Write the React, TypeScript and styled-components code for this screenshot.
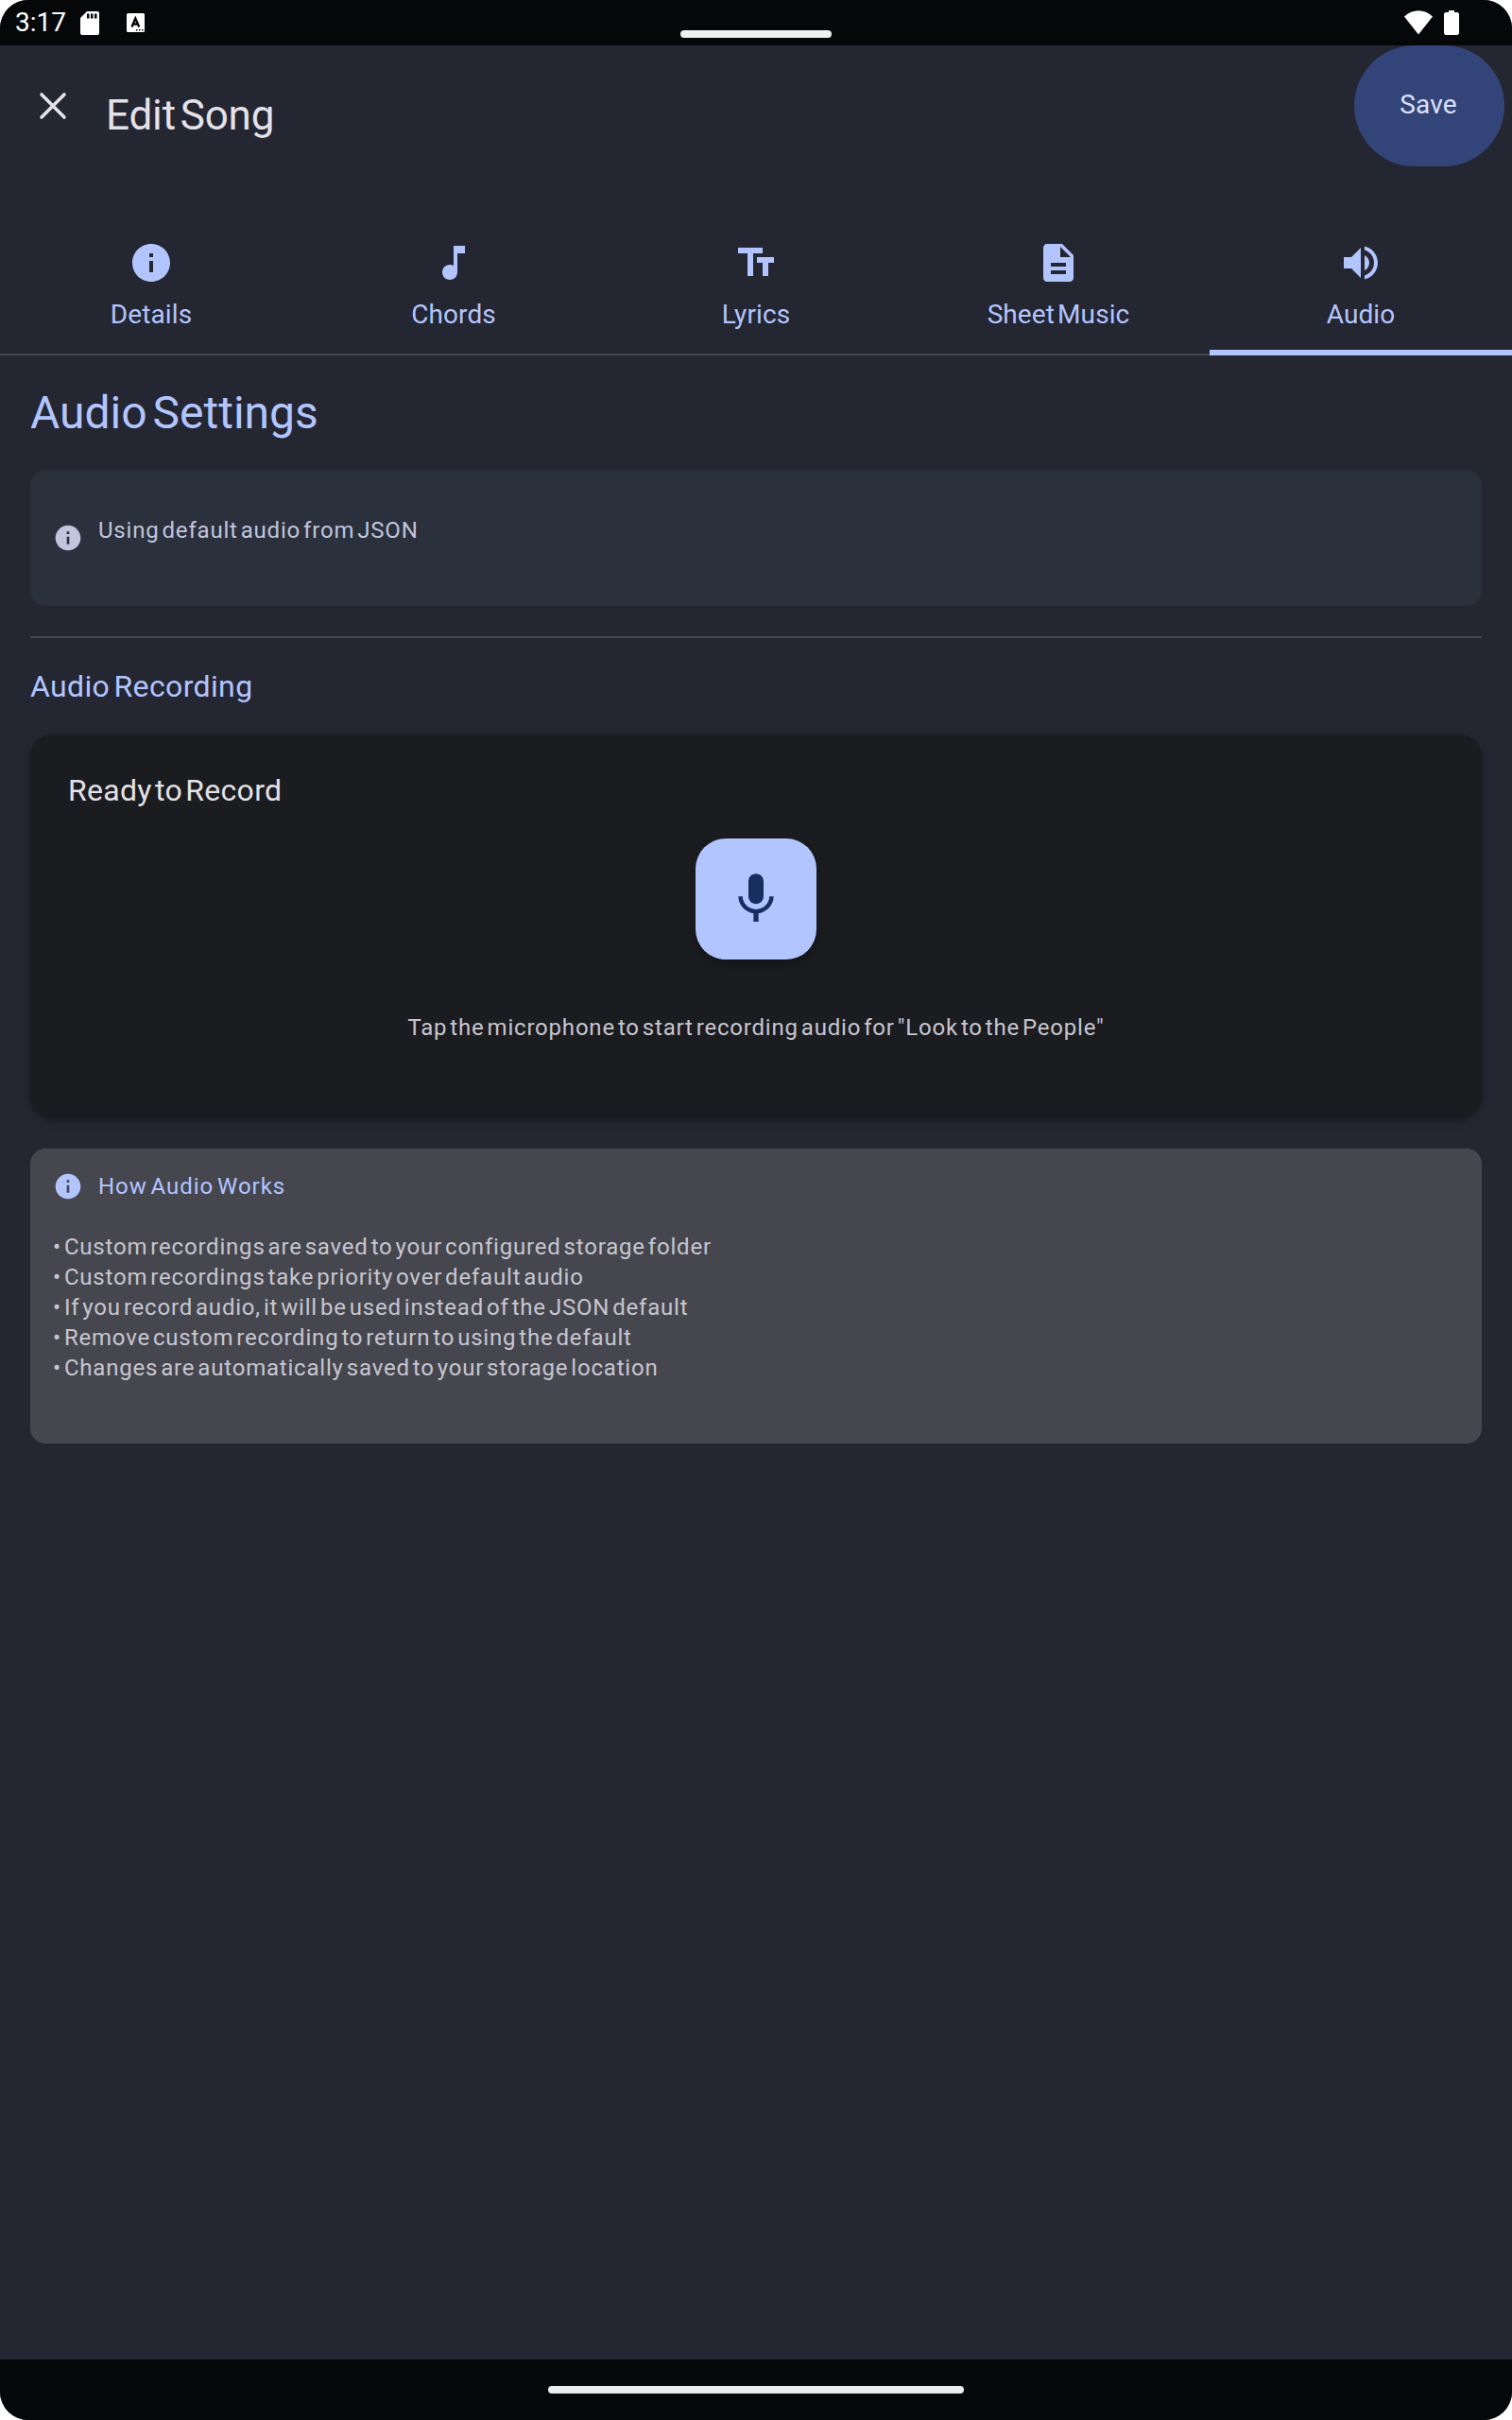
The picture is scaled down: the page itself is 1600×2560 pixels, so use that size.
import React from "react";
import styled, { createGlobalStyle } from "styled-components";

const GlobalStyle = createGlobalStyle`
  * { box-sizing: border-box; }
  html, body { margin: 0; background: #fff; }
  body { font-family: Roboto, "Noto Sans", sans-serif; }
`;

const Screen = styled.div`
  width: 1600px;
  height: 2560px;
  display: flex;
  flex-direction: column;
  background: #242631;
  border-radius: 30px;
  overflow: hidden;
`;

const StatusBar = styled.header`
  height: 48px;
  flex: none;
  display: grid;
  grid-template-columns: 1fr 160px 1fr;
  background: #060709;
`;

const StatusGroup = styled.div<{ $end?: boolean }>`
  display: flex;
  align-items: center;
  justify-content: ${(p) => (p.$end ? "flex-end" : "flex-start")};
  padding: ${(p) => (p.$end ? "0 56px 0 0" : "0 0 0 16px")};
`;

const Handle = styled.div`
  align-self: end;
  height: 8px;
  margin-bottom: 8px;
  border-radius: 4px;
  background: #eff0f4;
`;

interface TextProps {
  $size: number;
  $line: number;
  $color: string;
  $ls?: number;
  $ws?: number;
}

const Text = styled.span<TextProps>`
  display: block;
  white-space: nowrap;
  font-size: ${(p) => p.$size}px;
  line-height: ${(p) => p.$line}px;
  color: ${(p) => p.$color};
  letter-spacing: ${(p) => p.$ls ?? 0}px;
  word-spacing: ${(p) => p.$ws ?? 0}px;
`;

const StatusIcon = styled.svg<{ $gap: number }>`
  display: block;
  flex: none;
  margin-left: ${(p) => p.$gap}px;
`;

const AppBar = styled.div`
  height: 184px;
  flex: none;
  display: flex;
  align-items: flex-start;
  padding: 0 8px 0 32px;
`;

const CloseButton = styled.button`
  display: flex;
  width: 48px;
  height: 48px;
  margin: 40px 32px 0 0;
  padding: 0;
  border: 0;
  background: none;
`;

const Title = styled.h1`
  flex: 1;
  margin: 46px 0 0;
  font-weight: 400;
`;

const SaveButton = styled.button`
  width: 159px;
  height: 128px;
  display: flex;
  align-items: center;
  justify-content: center;
  padding: 0 2px 3px 0;
  border: 0;
  border-radius: 64px;
  background: #334478;
  font-family: inherit;
`;

const Tabs = styled.nav`
  height: 144px;
  flex: none;
  display: grid;
  grid-template-columns: repeat(5, 1fr);
`;

const Tab = styled.div<{ $active?: boolean }>`
  display: flex;
  flex-direction: column;
  align-items: center;
  gap: 11px;
  padding-top: 22px;
  box-shadow: inset 0 ${(p) => (p.$active ? "-6px #b3c5ff" : "-2px #46464f")};
`;

const Content = styled.main`
  flex: 1;
  padding: 0 32px;
`;

const Heading = styled.h2<{ $top: number; $bottom: number }>`
  margin: 0;
  padding: ${(p) => p.$top}px 0 ${(p) => p.$bottom}px;
  font-weight: 400;
`;

const StatusCard = styled.section`
  height: 144px;
  display: flex;
  align-items: center;
  gap: 16px;
  padding: 0 24px;
  border-radius: 16px;
  background: #2a303c;
`;

const StatusMessage = styled.div`
  padding-bottom: 16px;
`;

const Divider = styled.div`
  height: 2px;
  margin: 32px 0 0;
  background: #46464f;
`;

const RecordCard = styled.section`
  height: 406px;
  display: flex;
  flex-direction: column;
  align-items: center;
  padding: 35px 40px 0;
  border-radius: 24px;
  background: #1b1c20;
  box-shadow: 0 4px 10px rgba(0, 0, 0, 0.2), 0 1px 4px rgba(0, 0, 0, 0.1);
`;

const RecordTitle = styled.h3`
  align-self: flex-start;
  margin: 0;
  font-weight: 400;
`;

const MicButton = styled.button`
  width: 128px;
  height: 128px;
  display: flex;
  align-items: center;
  justify-content: center;
  margin: 27px 0 56px;
  padding: 0;
  border: 0;
  border-radius: 32px;
  background: #b3c5ff;
  box-shadow: 0 5px 10px rgba(0, 0, 0, 0.3);
`;

const HelpCard = styled.section`
  height: 312px;
  margin-top: 32px;
  padding: 24px;
  border-radius: 16px;
  background: #46464f;
`;

const HelpTitle = styled.div`
  display: flex;
  align-items: center;
  gap: 16px;
  margin-bottom: 32px;
`;

const HelpList = styled.ul`
  margin: 0;
  padding: 0;
  list-style: none;
`;

const NavBar = styled.footer`
  height: 64px;
  flex: none;
  display: flex;
  align-items: center;
  justify-content: center;
  background: #060709;
`;

const NavPill = styled.div`
  width: 440px;
  height: 8px;
  border-radius: 4px;
  background: #ececec;
`;

const paths = {
  info: "M12 2C6.480 2 2 6.480 2 12s4.480 10 10 10 10-4.480 10-10S17.520 2 12 2zm1 15h-2v-6h2v6zm0-8h-2V7h2v2z",
  note: "M12 3v10.550c-.590-.340-1.270-.550-2-.550-2.210 0-4 1.790-4 4s1.790 4 4 4 4-1.790 4-4V7h4V3h-6z",
  type: "M2.500 4v3h5v12h3V7h5V4h-13zm19 5h-9v3h3v7h3v-7h3V9z",
  page: "M14 2H6c-1.100 0-1.990.900-1.990 2L4 20c0 1.100.890 2 1.990 2H18c1.100 0 2-.900 2-2V8l-6-6zm2 16H8v-2h8v2zm0-4H8v-2h8v2zm-3-5V3.500L18.500 9H13z",
  volume:
    "M3 9v6h4l5 5V4L7 9H3zm13.500 3c0-1.770-1.020-3.290-2.500-4.030v8.050c1.480-.730 2.500-2.250 2.500-4.020zM14 3.230v2.060c2.890.860 5 3.540 5 6.710s-2.110 5.850-5 6.710v2.060c4.010-.910 7-4.490 7-8.770s-2.990-7.860-7-8.770z",
  mic: "M12 14c1.660 0 2.990-1.340 2.990-3L15 5c0-1.660-1.340-3-3-3S9 3.340 9 5v6c0 1.660 1.340 3 3 3zm5.300-3c0 3-2.540 5.100-5.300 5.100S6.700 14 6.700 11H5c0 3.410 2.720 6.230 6 6.720V21h2v-3.280c3.280-.480 6-3.300 6-6.720h-1.700z",
};

const Glyph = styled.svg`
  display: block;
  flex: none;
`;

function Icon({ name, size, color }: { name: keyof typeof paths; size: number; color: string }) {
  return (
    <Glyph width={size} height={size} viewBox="0 0 24 24" fill={color}>
      <path d={paths[name]} />
    </Glyph>
  );
}

const tabs: { icon: keyof typeof paths; label: string }[] = [
  { icon: "info", label: "Details" },
  { icon: "note", label: "Chords" },
  { icon: "type", label: "Lyrics" },
  { icon: "page", label: "Sheet Music" },
  { icon: "volume", label: "Audio" },
];

const notes = [
  "• Custom recordings are saved to your configured storage folder",
  "• Custom recordings take priority over default audio",
  "• If you record audio, it will be used instead of the JSON default",
  "• Remove custom recording to return to using the default",
  "• Changes are automatically saved to your storage location",
];

export default function App() {
  return (
    <>
      <GlobalStyle />
      <Screen>
        <StatusBar>
          <StatusGroup>
            <Text $size={28} $line={46} $color="#fff">3:17</Text>
            <StatusIcon $gap={15} width="22" height="26" viewBox="0 0 22 26">
              <path fill="#fff" d="M7 1h11a2 2 0 0 1 2 2v21a2 2 0 0 1-2 2H2a2 2 0 0 1-2-2V8z" />
              <path fill="#060709" d="M7 3.500h2.500v5H7zM11 3.500h2.500v5H11zM15 3.500h2.500v5H15z" />
            </StatusIcon>
            <StatusIcon $gap={27} width="20" height="20" viewBox="0 0 20 20">
              <rect width="19" height="20" rx="1.500" fill="#fff" />
              <path d="M5.500 14.500 9.300 5.500l3.900 9M7 11.500h4.800" fill="none" stroke="#060709" strokeWidth="2.400" />
              <path fill="#060709" d="M10 17h1.500v1.500H10zM13 17h1.500v1.500H13zM16 17h1.500v1.500H16z" />
            </StatusIcon>
          </StatusGroup>
          <Handle />
          <StatusGroup $end>
            <StatusIcon $gap={0} width="30" height="26" viewBox="0 0 30 26">
              <path fill="#fff" d="M0 6.500C4.500 2.500 9.500 0.300 15 0.300S25.500 2.500 30 6.500L15 25.500z" />
            </StatusIcon>
            <StatusIcon $gap={12} width="16" height="26" viewBox="0 0 16 26">
              <path fill="#fff" d="M5 0h6v2h3.500L16 3.500v21L14.500 26h-13L0 24.500v-21L1.500 2H5z" />
            </StatusIcon>
          </StatusGroup>
        </StatusBar>

        <AppBar>
          <CloseButton aria-label="Close">
            <Glyph width="48" height="48" viewBox="0 0 48 48">
              <path d="M12 12l24 24M36 12l-24 24" stroke="#e4e1e9" strokeWidth="3.600" strokeLinecap="round" />
            </Glyph>
          </CloseButton>
          <Title>
            <Text $size={44} $line={56} $color="#e4e1e9" $ls={-0.15} $ws={-6}>Edit Song</Text>
          </Title>
          <SaveButton>
            <Text $size={28} $line={40} $color="#dbe1ff" $ls={0.1}>Save</Text>
          </SaveButton>
        </AppBar>

        <Tabs>
          {tabs.map((t, i) => (
            <Tab key={t.label} $active={i === 4}>
              <Icon name={t.icon} size={48} color="#b3c5ff" />
              <Text $size={28} $line={40} $color="#b3c5ff" $ls={0.1} $ws={-4}>{t.label}</Text>
            </Tab>
          ))}
        </Tabs>

        <Content>
          <Heading $top={29} $bottom={28}>
            <Text $size={48} $line={64} $color="#b3c5ff" $ws={-6}>Audio Settings</Text>
          </Heading>
          <StatusCard>
            <Icon name="info" size={32} color="#c1c5dd" />
            <StatusMessage>
              <Text $size={24} $line={32} $color="#c1c5dd" $ls={0.8} $ws={-3.75}>Using default audio from JSON</Text>
            </StatusMessage>
          </StatusCard>
          <Divider />
          <Heading $top={27} $bottom={27}>
            <Text $size={32} $line={48} $color="#b3c5ff" $ls={0.36} $ws={-4}>Audio Recording</Text>
          </Heading>
          <RecordCard>
            <RecordTitle>
              <Text $size={32} $line={48} $color="#e4e1e6" $ls={0.3} $ws={-5}>Ready to Record</Text>
            </RecordTitle>
            <MicButton aria-label="Record">
              <Icon name="mic" size={64} color="#182e60" />
            </MicButton>
            <Text $size={24} $line={32} $color="#c6c6d0" $ls={0.8} $ws={-3.75}>
              Tap the microphone to start recording audio for "Look to the People"
            </Text>
          </RecordCard>
          <HelpCard>
            <HelpTitle>
              <Icon name="info" size={32} color="#b3c5ff" />
              <Text $size={24} $line={32} $color="#b3c5ff" $ls={0.95} $ws={-3}>How Audio Works</Text>
            </HelpTitle>
            <HelpList>
              {notes.map((note) => (
                <li key={note}>
                  <Text $size={24} $line={32} $color="#c6c6d0" $ls={0.8} $ws={-3.75}>{note}</Text>
                </li>
              ))}
            </HelpList>
          </HelpCard>
        </Content>

        <NavBar>
          <NavPill />
        </NavBar>
      </Screen>
    </>
  );
}
